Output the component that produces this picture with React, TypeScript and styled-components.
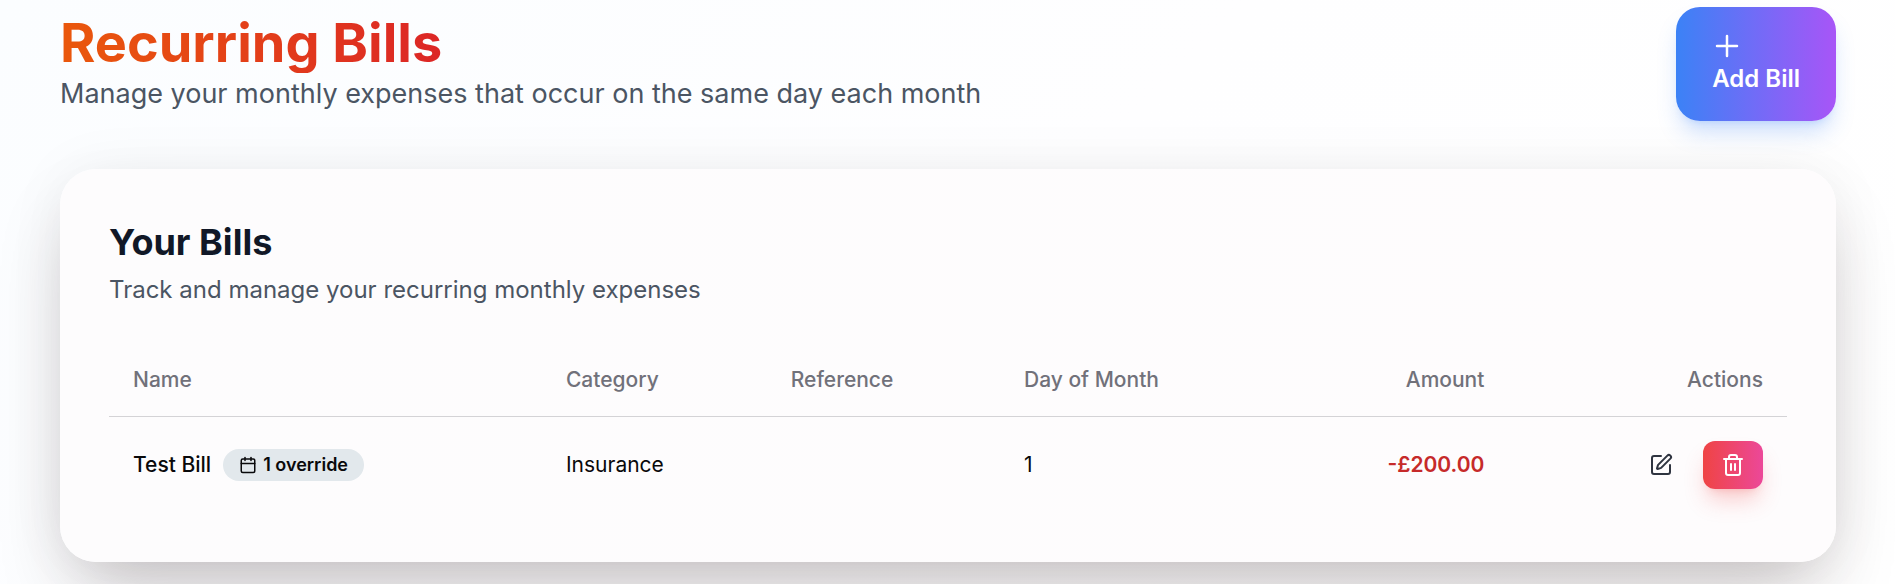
import React from "react";
import styled, { createGlobalStyle } from "styled-components";
import { Calendar, SquarePen, Trash2 } from "lucide-react";

const GlobalStyle = createGlobalStyle`
  *, *::before, *::after { box-sizing: border-box; }
  html { min-height: 100%; background: linear-gradient(135deg, #fbfdff 0%, #fefeff 50%, #ffffff 100%); }
  body { margin: 0; font-family: Inter, "Liberation Sans", sans-serif; color: #09090b; overflow: hidden; }
  h1, h2, p { margin: 0; }
  button { font: inherit; border: 0; cursor: pointer; }
`;

const Page = styled.main`
  padding: 7px 59px 48px 60px;
`;

const Header = styled.header`
  display: flex;
  align-items: center;
  justify-content: space-between;
  margin-bottom: 48px;
`;

const PageTitle = styled.h1`
  width: fit-content;
  font-size: 54px;
  line-height: 60px;
  font-weight: 700;
  color: transparent;
  background: linear-gradient(to right, #ea580c, #dc2626);
  background-clip: text;
  -webkit-background-clip: text;
`;

const Subtitle = styled.p`
  font-size: 27px;
  line-height: 42px;
  color: #4b5563;
`;

const AddButton = styled.button`
  display: flex;
  flex-direction: column;
  align-items: flex-start;
  padding: 24px 36px;
  border-radius: 24px;
  color: #fff;
  font-size: 24px;
  line-height: 36px;
  font-weight: 600;
  background: linear-gradient(to right, #3b82f6, #a855f7);
  box-shadow: 0 15px 22px -4px rgba(59, 130, 246, 0.25), 0 6px 9px -6px rgba(59, 130, 246, 0.25);
`;

const Card = styled.section`
  padding: 49px;
  border-radius: 36px;
  background: #fdfbfd;
  background: linear-gradient(to right, #fdfcfd, #fefcfd);
  box-shadow: 0 38px 76px -18px rgba(44, 24, 28, 0.28), 0 0 60px rgba(44, 24, 28, 0.05);
`;

const CardTitle = styled.h2`
  font-size: 36px;
  line-height: 48px;
  font-weight: 700;
  color: #111827;
`;

const CardText = styled.p`
  margin-top: 6px;
  font-size: 24px;
  line-height: 36px;
  color: #4b5563;
`;

const Table = styled.table`
  width: 100%;
  margin-top: 36px;
  border-collapse: collapse;
  table-layout: fixed;
  font-size: 21px;
  line-height: 30px;
`;

const HeadCell = styled.th<{ $end?: boolean }>`
  height: 72px;
  padding: 0 24px;
  border-bottom: 1px solid #d4d3d6;
  font-weight: 500;
  color: #71717a;
  text-align: ${(p) => (p.$end ? "right" : "left")};
`;

const Cell = styled.td<{ $end?: boolean }>`
  padding: 24px;
  text-align: ${(p) => (p.$end ? "right" : "left")};
`;

const Group = styled.div<{ $end?: boolean }>`
  display: flex;
  align-items: center;
  gap: 12px;
  justify-content: ${(p) => (p.$end ? "flex-end" : "flex-start")};
`;

const BillName = styled.span`
  font-weight: 500;
`;

const Badge = styled.span`
  display: inline-flex;
  align-items: center;
  gap: 6px;
  padding: 4px 16px;
  border-radius: 16px;
  background: #e2e8ec;
  font-size: 18px;
  line-height: 24px;
  font-weight: 600;
`;

const Amount = styled.span`
  font-weight: 600;
  color: #c62a2a;
`;

const IconButton = styled.button<{ $danger?: boolean }>`
  display: flex;
  align-items: center;
  justify-content: center;
  width: 60px;
  height: 48px;
  padding: 0;
  border-radius: 12px;
  color: ${(p) => (p.$danger ? "#fff" : "#2f3440")};
  background: ${(p) => (p.$danger ? "linear-gradient(to right, #ef4444, #ec4899)" : "transparent")};
  box-shadow: ${(p) => (p.$danger ? "0 15px 22px -4px rgba(239, 68, 68, 0.25), 0 6px 9px -6px rgba(239, 68, 68, 0.25)" : "none")};
`;

const PlusIcon = () => (
  <svg width="30" height="30" viewBox="0 0 24 24" fill="none" stroke="currentColor" strokeWidth="2" strokeLinecap="round" aria-hidden="true">
    <path d="M12 4v16M4 12h16" />
  </svg>
);

const columns = [
  { label: "Name", width: "25.8%" },
  { label: "Category", width: "13.4%" },
  { label: "Reference", width: "13.9%" },
  { label: "Day of Month", width: "15.3%" },
  { label: "Amount", width: "15%", end: true },
  { label: "Actions", width: "16.6%", end: true },
];

export default function App() {
  return (
    <>
      <GlobalStyle />
      <Page>
        <Header>
          <div>
            <PageTitle>Recurring Bills</PageTitle>
            <Subtitle>Manage your monthly expenses that occur on the same day each month</Subtitle>
          </div>
          <AddButton type="button">
            <PlusIcon />
            Add Bill
          </AddButton>
        </Header>
        <Card>
          <CardTitle>Your Bills</CardTitle>
          <CardText>Track and manage your recurring monthly expenses</CardText>
          <Table>
            <colgroup>
              {columns.map((c) => (
                <col key={c.label} width={c.width} />
              ))}
            </colgroup>
            <thead>
              <tr>
                {columns.map((c) => (
                  <HeadCell key={c.label} scope="col" $end={c.end}>
                    {c.label}
                  </HeadCell>
                ))}
              </tr>
            </thead>
            <tbody>
              <tr>
                <Cell>
                  <Group>
                    <BillName>Test Bill</BillName>
                    <Badge>
                      <Calendar size={18} />1 override
                    </Badge>
                  </Group>
                </Cell>
                <Cell>Insurance</Cell>
                <Cell />
                <Cell>1</Cell>
                <Cell $end>
                  <Amount>-£200.00</Amount>
                </Cell>
                <Cell $end>
                  <Group $end>
                    <IconButton type="button" aria-label="Edit bill">
                      <SquarePen size={24} />
                    </IconButton>
                    <IconButton type="button" aria-label="Delete bill" $danger>
                      <Trash2 size={24} />
                    </IconButton>
                  </Group>
                </Cell>
              </tr>
            </tbody>
          </Table>
        </Card>
      </Page>
    </>
  );
}
